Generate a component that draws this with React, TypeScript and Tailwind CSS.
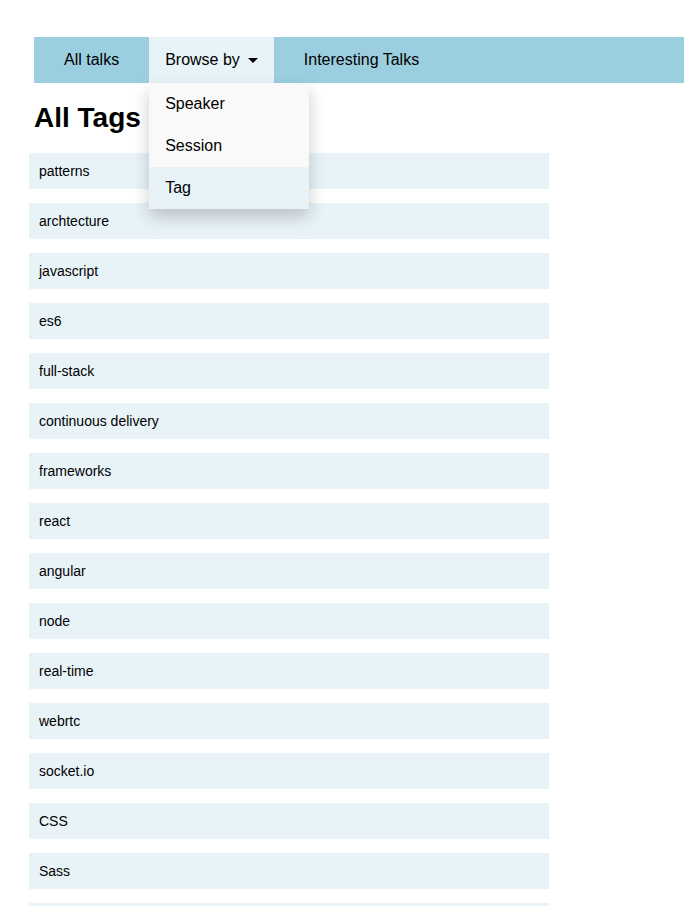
const tags = [
  "patterns",
  "archtecture",
  "javascript",
  "es6",
  "full-stack",
  "continuous delivery",
  "frameworks",
  "react",
  "angular",
  "node",
  "real-time",
  "webrtc",
  "socket.io",
  "CSS",
  "Sass",
  "performance",
];

const browseItems = ["Speaker", "Session", "Tag"];

export default function App() {
  const activeItem = "Tag";

  return (
    <div className="min-h-screen overflow-hidden bg-white pt-[37px] font-['Liberation_Sans',Arial,sans-serif] text-black">
      <nav className="ml-[34px] flex h-[46px] bg-[#9bcfe0] text-base">
        <a className="flex items-center px-[30px]">All talks</a>

        <div className="relative">
          <button className="flex h-full items-center bg-[#e8f3f8] px-4">
            Browse by
            <span className="ml-[8px] h-0 w-0 border-x-[5px] border-t-[5px] border-x-transparent border-t-black" />
          </button>
          <div className="absolute left-0 top-full z-10 w-[160px] bg-[#f9f9f9] shadow-[0px_8px_16px_0px_rgba(0,0,0,0.2)]">
            {browseItems.map((item) => (
              <a
                key={item}
                className={`flex h-[42px] items-center px-4 ${item === activeItem ? "bg-[#e8f3f8]" : ""}`}
              >
                {item}
              </a>
            ))}
          </div>
        </div>

        <a className="flex items-center px-[30px]">Interesting Talks</a>
      </nav>

      <h1 className="ml-[34px] mt-[19px] text-[28px] font-bold leading-[32px]">All Tags</h1>

      <ul className="ml-[29px] mt-[19px] flex w-[520px] flex-col gap-[14px]">
        {tags.map((tag) => (
          <li key={tag} className="flex h-9 items-center bg-[#e8f3f8] px-[10px] text-sm">
            {tag}
          </li>
        ))}
      </ul>
    </div>
  );
}
